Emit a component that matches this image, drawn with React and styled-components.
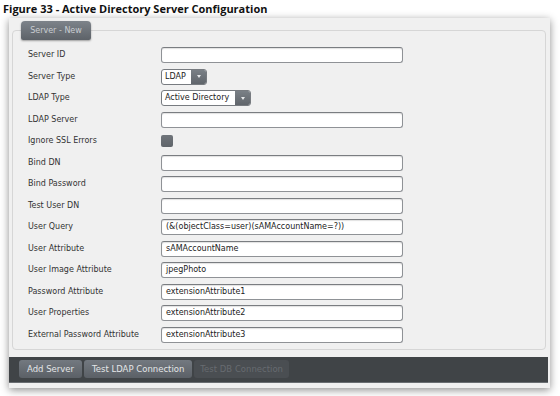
import React from 'react'
import styled, { createGlobalStyle } from 'styled-components'

const GlobalStyle = createGlobalStyle`
  body {
    margin: 0;
    background: #ffffff;
    font-family: "DejaVu Sans", Verdana, sans-serif;
  }
`

const Page = styled.div`
  width: 560px;
  height: 396px;
  overflow: hidden;
`

const Title = styled.div`
  padding: 1px 0 0 3px;
  height: 16px;
  font-family: "Open Sans", "DejaVu Sans", sans-serif;
  font-weight: bold;
  font-size: 11px;
  line-height: 15px;
  color: #111;
`

const Panel = styled.div`
  margin: 1px 0 0 9px;
  width: 541px;
  height: 370px;
  background: #f0f0f0;
  box-shadow: 0 2px 8px rgba(0, 0, 0, 0.45);
  display: flex;
  flex-direction: column;
`

const Fieldset = styled.fieldset`
  margin: 3px 4px 0 3px;
  padding: 7px 0 6px 15px;
  border: 1px solid #d6d6d6;
  border-radius: 4px;
  min-width: 0;
`

const Legend = styled.legend`
  margin-left: -7px;
  padding: 0;
`

const Tab = styled.span`
  display: block;
  width: 70px;
  height: 19px;
  border-radius: 4px 4px 2px 2px;
  background: linear-gradient(#7d838a, #5d6268);
  box-shadow: 0 1px 2px rgba(0, 0, 0, 0.35);
  color: #c9cdd2;
  font-size: 8px;
  line-height: 19px;
  text-align: center;
`

const Form = styled.div`
  display: grid;
  grid-template-columns: 133px 242px;
  row-gap: 5.5px;
`

const Label = styled.div`
  height: 16px;
  font-size: 8px;
  line-height: 16px;
  color: #333;
  white-space: nowrap;
`

const Input = styled.div`
  box-sizing: border-box;
  height: 16px;
  width: 242px;
  border: 1px solid #8f9296;
  border-top-color: #7a7d81;
  border-radius: 3px;
  background: #fff;
  box-shadow: inset 0 1px 1px rgba(0, 0, 0, 0.12);
  padding: 0 4px;
  font-size: 8px;
  line-height: 14px;
  color: #222;
  white-space: nowrap;
  overflow: hidden;
`

const Select = styled.div`
  display: flex;
  box-sizing: border-box;
  height: 16px;
  width: ${p => p.$width};
  border: 1px solid #777b80;
  border-radius: 3px;
  overflow: hidden;
  background: #fff;
`

const SelectText = styled.div`
  flex: 1;
  padding: 0 3px;
  font-size: 8px;
  line-height: 14px;
  color: #222;
  white-space: nowrap;
`

const SelectButton = styled.div`
  width: 15px;
  background: linear-gradient(#7a8086, #60656b);
  display: flex;
  align-items: center;
  justify-content: center;
  &::after {
    content: '';
    border-left: 2.5px solid transparent;
    border-right: 2.5px solid transparent;
    border-top: 3px solid #e6e8ea;
  }
`

const CheckCell = styled.div`
  height: 16px;
  display: flex;
  align-items: center;
`

const Checkbox = styled.div`
  width: 12px;
  height: 12px;
  border-radius: 2px;
  background: linear-gradient(#6f747a, #5f646a);
`

const Footer = styled.div`
  margin: 7px 2px 0 0;
  height: 26px;
  background: #404447;
  border-bottom: 1px solid #6a6e72;
  box-sizing: border-box;
  display: flex;
  align-items: center;
  gap: 2px;
  padding: 0 0 0 10px;
`

const Button = styled.div`
  height: 18px;
  padding: 0 ${p => (p.$disabled ? '6px' : '8px')};
  border-radius: 3px;
  background: ${p => (p.$disabled ? '#4a4e52' : 'linear-gradient(#737980, #5b6066)')};
  color: ${p => (p.$disabled ? '#676b70' : '#e4e6e8')};
  font-size: 8.5px;
  line-height: 18px;
  white-space: nowrap;
`

const fields = [
  { label: 'Server ID' },
  { label: 'Server Type', select: 'LDAP', width: '46px' },
  { label: 'LDAP Type', select: 'Active Directory', width: '90px' },
  { label: 'LDAP Server' },
  { label: 'Ignore SSL Errors', check: true },
  { label: 'Bind DN' },
  { label: 'Bind Password' },
  { label: 'Test User DN' },
  { label: 'User Query', value: '(&(objectClass=user)(sAMAccountName=?))' },
  { label: 'User Attribute', value: 'sAMAccountName' },
  { label: 'User Image Attribute', value: 'jpegPhoto' },
  { label: 'Password Attribute', value: 'extensionAttribute1' },
  { label: 'User Properties', value: 'extensionAttribute2' },
  { label: 'External Password Attribute', value: 'extensionAttribute3' }
]

const Field = ({ field }) => {
  if (field.select) {
    return (
      <Select $width={field.width}>
        <SelectText>{field.select}</SelectText>
        <SelectButton />
      </Select>
    )
  }
  if (field.check) {
    return <CheckCell><Checkbox /></CheckCell>
  }
  return <Input>{field.value}</Input>
}

const App = () => {
  return (
    <Page>
      <GlobalStyle />
      <Title>Figure 33 - Active Directory Server Configuration</Title>
      <Panel>
        <Fieldset>
          <Legend><Tab>Server - New</Tab></Legend>
          <Form>
            {fields.map(field =>
              <React.Fragment key={field.label}>
                <Label>{field.label}</Label>
                <Field field={field} />
              </React.Fragment>
            )}
          </Form>
        </Fieldset>
        <Footer>
          <Button>Add Server</Button>
          <Button>Test LDAP Connection</Button>
          <Button $disabled>Test DB Connection</Button>
        </Footer>
      </Panel>
    </Page>
  )
}

export default App
